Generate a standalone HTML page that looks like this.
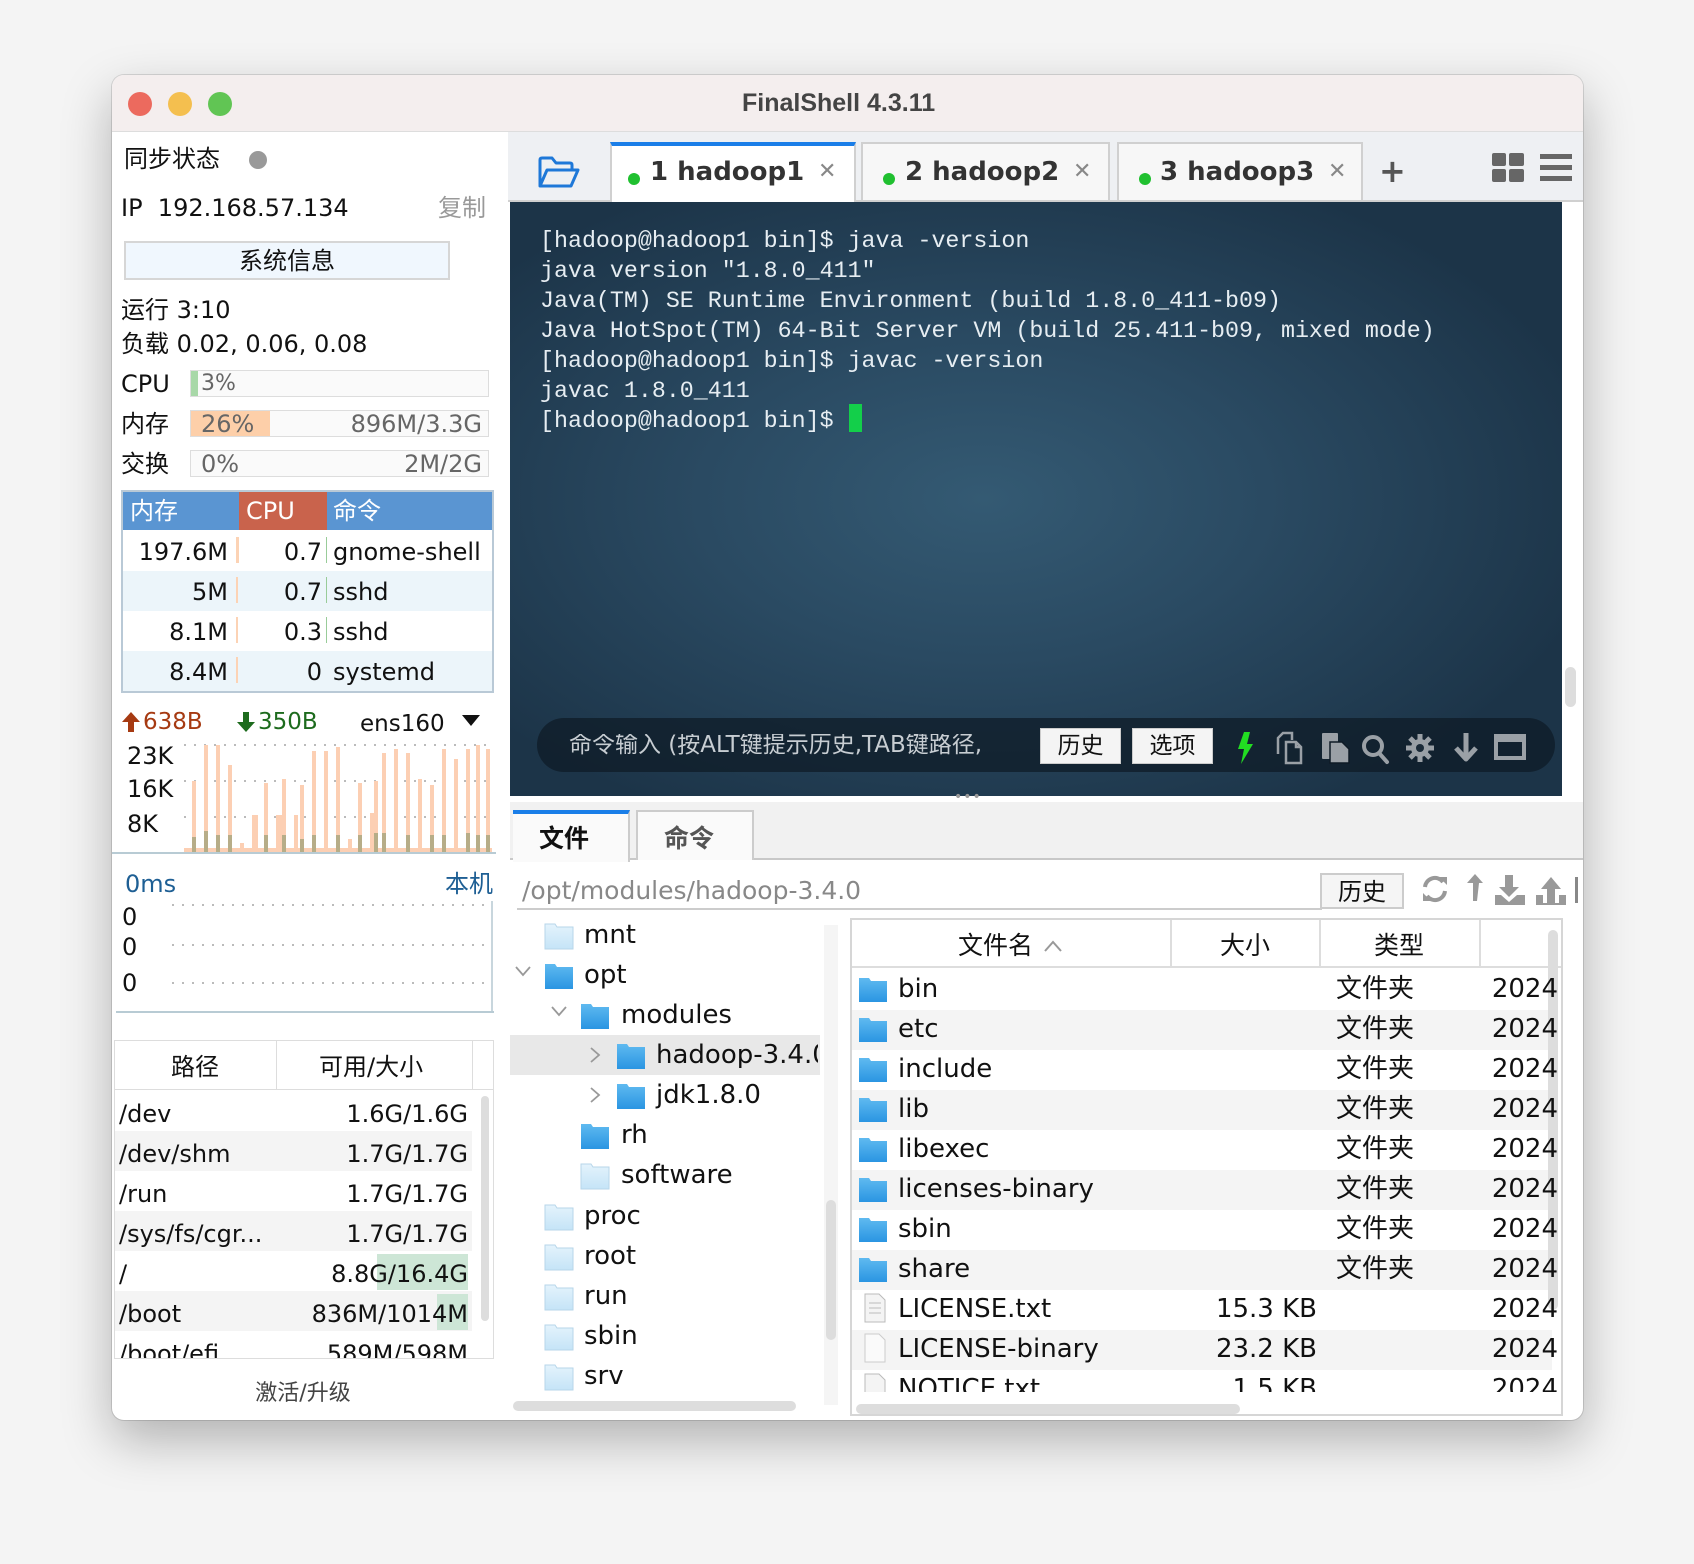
<!DOCTYPE html>
<html><head><meta charset="utf-8">
<style>
*{box-sizing:border-box;margin:0;padding:0}
body{width:1694px;height:1564px;background:#f4f4f4;position:relative;overflow:hidden;font-family:"DejaVu Sans","Noto Sans CJK SC",sans-serif;color:#111}
.a{position:absolute}
.win{position:absolute;left:112px;top:75px;width:1471px;height:1345px;background:#fff;border-radius:12px;overflow:hidden;box-shadow:0 20px 50px rgba(0,0,0,.28),0 0 0 1px rgba(0,0,0,.12)}
.t{position:absolute;white-space:nowrap;font-size:24px;line-height:1;font-family:"DejaVu Sans","Noto Sans CJK SC",sans-serif}
.mono{font-family:"Liberation Mono","DejaVu Sans Mono",monospace}
.bar{position:absolute;height:27px;border:1px solid #ddd;background:#fafafa}
.row{position:absolute;height:40px}
</style></head><body>
<div class="win">
 <div class="a" style="left:0;top:0;width:1471px;height:57px;background:#f4eeee;border-bottom:1px solid #ddd"></div>
 <div class="a" style="left:16px;top:17px;width:24px;height:24px;border-radius:50%;background:#ec6a5e"></div>
 <div class="a" style="left:56px;top:17px;width:24px;height:24px;border-radius:50%;background:#f4bf4f"></div>
 <div class="a" style="left:96px;top:17px;width:24px;height:24px;border-radius:50%;background:#61c554"></div>
 <div class="t" style="left:630px;top:16px;font-size:25px;font-weight:bold;color:#444;font-family:'Liberation Sans',sans-serif">FinalShell 4.3.11</div>

 <!-- left panel -->
 <div class="t" style="left:12px;top:72px">同步状态</div>
 <div class="a" style="left:137px;top:76px;width:18px;height:18px;border-radius:50%;background:#999"></div>
 <div class="t" style="left:9px;top:121px">IP&nbsp; 192.168.57.134</div>
 <div class="t" style="left:326px;top:121px;color:#999">复制</div>
 <div class="a" style="left:12px;top:166px;width:326px;height:39px;background:#f0f7fe;border:2px solid #d6d6d6"></div>
 <div class="t" style="left:12px;top:174px;width:326px;text-align:center">系统信息</div>
 <div class="t" style="left:9px;top:223px">运行 3:10</div>
 <div class="t" style="left:9px;top:257px">负载 0.02, 0.06, 0.08</div>
 <div class="t" style="left:9px;top:297px">CPU</div>
 <div class="bar" style="left:78px;top:295px;width:299px"><div class="a" style="left:0;top:0;width:7px;height:25px;background:#a8d8a8"></div><span class="t" style="left:10px;top:2px;color:#666;font-size:22px">3%</span></div>
 <div class="t" style="left:9px;top:337px">内存</div>
 <div class="bar" style="left:78px;top:335px;width:299px"><div class="a" style="left:0;top:0;width:79px;height:25px;background:#fdcfa9"></div><span class="t" style="left:10px;top:1px;color:#666">26%</span><span class="t" style="right:6px;top:1px;color:#666">896M/3.3G</span></div>
 <div class="t" style="left:9px;top:377px">交换</div>
 <div class="bar" style="left:78px;top:375px;width:299px"><span class="t" style="left:10px;top:1px;color:#666">0%</span><span class="t" style="right:6px;top:1px;color:#666">2M/2G</span></div>

 <!-- process table -->
 <div class="a" style="left:9px;top:415px;width:373px;height:203px;border:2px solid #b9c9d6;background:#fff"></div>
 <div class="a" style="left:11px;top:417px;width:116px;height:38px;background:#5a95d2"></div>
 <div class="a" style="left:127px;top:417px;width:88px;height:38px;background:#c9634c"></div>
 <div class="a" style="left:215px;top:417px;width:165px;height:38px;background:#5a95d2"></div>
 <div class="t" style="left:18px;top:424px;color:#fff">内存</div>
 <div class="t" style="left:134px;top:424px;color:#fff">CPU</div>
 <div class="t" style="left:221px;top:424px;color:#fff">命令</div>
 <div class="row" style="left:11px;top:456px;width:369px;background:#fff"></div>
 <div class="row" style="left:11px;top:496px;width:369px;background:#ecf5fa"></div>
 <div class="row" style="left:11px;top:536px;width:369px;background:#fff"></div>
 <div class="row" style="left:11px;top:576px;width:369px;background:#ecf5fa"></div>
 <div class="a" style="left:124px;top:462px;width:3px;height:26px;background:#fcd3b5"></div>
 <div class="a" style="left:124px;top:502px;width:2px;height:26px;background:#fcd3b5"></div>
 <div class="a" style="left:124px;top:542px;width:2px;height:26px;background:#fcd3b5"></div>
 <div class="a" style="left:124px;top:582px;width:2px;height:26px;background:#fcd3b5"></div>
 <div class="a" style="left:214px;top:462px;width:1px;height:26px;background:#9c9"></div>
 <div class="a" style="left:214px;top:502px;width:1px;height:26px;background:#9c9"></div>
 <div class="a" style="left:214px;top:542px;width:1px;height:26px;background:#9c9"></div>
 <div class="t" style="left:11px;top:465px;width:105px;text-align:right">197.6M</div><div class="t" style="left:127px;top:465px;width:83px;text-align:right">0.7</div><div class="t" style="left:221px;top:465px">gnome-shell</div>
 <div class="t" style="left:11px;top:505px;width:105px;text-align:right">5M</div><div class="t" style="left:127px;top:505px;width:83px;text-align:right">0.7</div><div class="t" style="left:221px;top:505px">sshd</div>
 <div class="t" style="left:11px;top:545px;width:105px;text-align:right">8.1M</div><div class="t" style="left:127px;top:545px;width:83px;text-align:right">0.3</div><div class="t" style="left:221px;top:545px">sshd</div>
 <div class="t" style="left:11px;top:585px;width:105px;text-align:right">8.4M</div><div class="t" style="left:127px;top:585px;width:83px;text-align:right">0</div><div class="t" style="left:221px;top:585px">systemd</div>

 <!-- network -->
 <svg class="a" style="left:9px;top:636px" width="20" height="22" viewBox="0 0 20 22"><path d="M10 1 L19 11 H13 V21 H7 V11 H1 Z" fill="#a63a12"/></svg>
 <div class="t" style="left:31px;top:636px;color:#a63a12;font-size:23px">638B</div>
 <svg class="a" style="left:124px;top:636px" width="20" height="22" viewBox="0 0 20 22"><path d="M10 21 L19 11 H13 V1 H7 V11 H1 Z" fill="#1d6b1d"/></svg>
 <div class="t" style="left:146px;top:636px;color:#1d6b1d;font-size:23px">350B</div>
 <div class="t" style="left:248px;top:638px;font-size:23px">ens160</div>
 <svg class="a" style="left:350px;top:640px" width="18" height="12"><path d="M0 0H18L9 11Z" fill="#111"/></svg>
 <div class="t" style="left:15px;top:669px">23K</div>
 <div class="t" style="left:15px;top:702px">16K</div>
 <div class="t" style="left:15px;top:737px">8K</div>
 <svg class="a" style="left:0;top:660px" width="384" height="120">
  <g stroke="#bbb" stroke-width="2" stroke-dasharray="2 8"><line x1="72" y1="10" x2="380" y2="10"/><line x1="72" y1="46" x2="380" y2="46"/><line x1="72" y1="82" x2="380" y2="82"/></g>
  <g fill="#fccfb3">
   <rect x="72" y="113" width="308" height="4"/>
   <rect x="80" y="46" width="4" height="71"/><rect x="92" y="10" width="4" height="107"/><rect x="104" y="10" width="4" height="107"/><rect x="116" y="30" width="4" height="87"/>
   <rect x="128" y="108" width="4" height="9"/><rect x="140" y="80" width="6" height="37"/><rect x="152" y="48" width="4" height="69"/><rect x="164" y="80" width="6" height="37"/>
   <rect x="170" y="44" width="4" height="73"/><rect x="182" y="80" width="4" height="37"/><rect x="188" y="50" width="4" height="67"/><rect x="200" y="16" width="4" height="101"/>
   <rect x="212" y="16" width="4" height="101"/><rect x="224" y="12" width="4" height="105"/><rect x="236" y="104" width="4" height="13"/><rect x="246" y="48" width="4" height="69"/>
   <rect x="258" y="78" width="4" height="39"/><rect x="262" y="46" width="4" height="71"/><rect x="270" y="18" width="4" height="99"/><rect x="282" y="14" width="4" height="103"/>
   <rect x="294" y="18" width="4" height="99"/><rect x="306" y="44" width="4" height="73"/><rect x="318" y="50" width="4" height="67"/><rect x="330" y="14" width="4" height="103"/>
   <rect x="342" y="24" width="4" height="93"/><rect x="354" y="14" width="4" height="103"/><rect x="364" y="10" width="4" height="107"/><rect x="374" y="14" width="4" height="103"/>
  </g>
  <g fill="#b7ad88">
   <rect x="80" y="102" width="4" height="15"/><rect x="92" y="96" width="4" height="21"/><rect x="104" y="100" width="4" height="17"/><rect x="116" y="100" width="4" height="17"/>
   <rect x="152" y="100" width="4" height="17"/><rect x="170" y="100" width="4" height="17"/><rect x="188" y="104" width="4" height="13"/><rect x="200" y="100" width="4" height="17"/>
   <rect x="224" y="100" width="4" height="17"/><rect x="246" y="100" width="4" height="17"/><rect x="262" y="98" width="4" height="19"/><rect x="270" y="98" width="4" height="19"/>
   <rect x="294" y="100" width="4" height="17"/><rect x="318" y="100" width="4" height="17"/><rect x="330" y="100" width="4" height="17"/><rect x="354" y="98" width="4" height="19"/>
   <rect x="364" y="100" width="4" height="17"/><rect x="374" y="100" width="4" height="17"/>
  </g>
  <line x1="0" y1="118" x2="384" y2="118" stroke="#b8cbd4" stroke-width="2"/>
 </svg>
 <div class="t" style="left:13px;top:797px;color:#1e5f94">0ms</div>
 <div class="t" style="left:333px;top:797px;color:#1e5f94">本机</div>
 <div class="t" style="left:10px;top:830px">0</div>
 <div class="t" style="left:10px;top:860px">0</div>
 <div class="t" style="left:10px;top:896px">0</div>
 <svg class="a" style="left:0;top:820px" width="384" height="120">
  <g stroke="#bbb" stroke-width="2" stroke-dasharray="2 8"><line x1="60" y1="10" x2="380" y2="10"/><line x1="60" y1="50" x2="380" y2="50"/><line x1="60" y1="88" x2="380" y2="88"/></g>
  <line x1="380" y1="6" x2="380" y2="117" stroke="#c8d6dd" stroke-width="2"/>
  <line x1="4" y1="117" x2="382" y2="117" stroke="#b8cbd4" stroke-width="2"/>
 </svg>

 <!-- disk table -->
 <div class="a" style="left:2px;top:965px;width:380px;height:318px;border:1px solid #ddd;border-bottom:none;overflow:hidden">
  <div class="a" style="left:0;top:0;width:380px;height:49px;border-bottom:1px solid #ddd"></div>
  <div class="a" style="left:161px;top:0;width:1px;height:49px;background:#ddd"></div>
  <div class="a" style="left:357px;top:0;width:1px;height:49px;background:#ddd"></div>
  <div class="t" style="left:56px;top:14px">路径</div>
  <div class="t" style="left:204px;top:14px">可用/大小</div>
  <div class="row" style="left:0;top:90px;width:357px;background:#f4f4f4"></div>
  <div class="row" style="left:0;top:170px;width:357px;background:#f4f4f4"></div>
  <div class="row" style="left:0;top:250px;width:357px;background:#f4f4f4"></div>
  <div class="a" style="left:262px;top:213px;width:91px;height:36px;background:#cde6d6"></div>
  <div class="a" style="left:322px;top:253px;width:31px;height:36px;background:#cde6d6"></div>
  <div class="t" style="left:4px;top:61px">/dev</div><div class="t" style="left:150px;top:61px;width:203px;text-align:right">1.6G/1.6G</div>
  <div class="t" style="left:4px;top:101px">/dev/shm</div><div class="t" style="left:150px;top:101px;width:203px;text-align:right">1.7G/1.7G</div>
  <div class="t" style="left:4px;top:141px">/run</div><div class="t" style="left:150px;top:141px;width:203px;text-align:right">1.7G/1.7G</div>
  <div class="t" style="left:4px;top:181px">/sys/fs/cgr...</div><div class="t" style="left:150px;top:181px;width:203px;text-align:right">1.7G/1.7G</div>
  <div class="t" style="left:4px;top:221px">/</div><div class="t" style="left:150px;top:221px;width:203px;text-align:right">8.8G/16.4G</div>
  <div class="t" style="left:4px;top:261px">/boot</div><div class="t" style="left:150px;top:261px;width:203px;text-align:right">836M/1014M</div>
  <div class="t" style="left:4px;top:301px">/boot/efi</div><div class="t" style="left:150px;top:301px;width:203px;text-align:right">589M/598M</div>
  <div class="a" style="left:366px;top:55px;width:8px;height:225px;border-radius:4px;background:#ddd"></div>
 </div>
 <div class="a" style="left:2px;top:1283px;width:380px;height:1px;background:#ddd"></div>
 <div class="t" style="left:0;top:1308px;width:382px;text-align:center;font-size:22px;color:#444">激活/升级</div>

 <!-- right: tab bar -->
 <div class="a" style="left:396px;top:57px;width:1075px;height:70px;background:#eef0f3;border-bottom:2px solid #d0d0d0"></div>
 <svg class="a" style="left:425px;top:80px" width="44" height="34" viewBox="0 0 44 34"><path d="M3 31 V5 Q3 3 5 3 H15 L19 8 H33 Q35 8 35 10 V14 M3 31 L10 15 H41 L34 31 Z" fill="none" stroke="#1e78d8" stroke-width="3" stroke-linejoin="round"/></svg>
 <div class="a" style="left:498px;top:67px;width:246px;height:62px;background:#fff;border-left:2px solid #d0d0d0;border-right:2px solid #d0d0d0;border-top:4px solid #1a7ee8"></div>
 <div class="a" style="left:749px;top:67px;width:249px;height:60px;background:#f7f7f7;border:2px solid #d0d0d0"></div>
 <div class="a" style="left:1005px;top:67px;width:246px;height:60px;background:#f7f7f7;border:2px solid #d0d0d0"></div>
 <div class="a" style="left:516px;top:98px;width:12px;height:12px;border-radius:50%;background:#20c030"></div>
 <div class="t" style="left:538px;top:84px;font-size:26px;font-weight:bold;color:#333">1 hadoop1</div>
 <div class="t" style="left:706px;top:86px;font-size:22px;color:#888">✕</div>
 <div class="a" style="left:771px;top:98px;width:12px;height:12px;border-radius:50%;background:#20c030"></div>
 <div class="t" style="left:793px;top:84px;font-size:26px;font-weight:bold;color:#333">2 hadoop2</div>
 <div class="t" style="left:961px;top:86px;font-size:22px;color:#888">✕</div>
 <div class="a" style="left:1027px;top:98px;width:12px;height:12px;border-radius:50%;background:#20c030"></div>
 <div class="t" style="left:1048px;top:84px;font-size:26px;font-weight:bold;color:#333">3 hadoop3</div>
 <div class="t" style="left:1216px;top:86px;font-size:22px;color:#888">✕</div>
 <div class="t" style="left:1267px;top:80px;font-size:32px;font-weight:bold;color:#555">+</div>
 <svg class="a" style="left:1380px;top:78px" width="32" height="30"><rect x="0" y="0" width="14" height="13" rx="2" fill="#666"/><rect x="17" y="0" width="15" height="13" rx="2" fill="#666"/><rect x="0" y="16" width="14" height="13" rx="2" fill="#666"/><rect x="17" y="16" width="15" height="13" rx="2" fill="#666"/></svg>
 <svg class="a" style="left:1428px;top:78px" width="32" height="30"><rect x="0" y="1" width="32" height="5" fill="#666"/><rect x="0" y="12" width="32" height="5" fill="#666"/><rect x="0" y="23" width="32" height="5" fill="#666"/></svg>

 <!-- terminal -->
 <div class="a" style="left:398px;top:127px;width:1052px;height:594px;background:radial-gradient(ellipse 60% 60% at 45% 50%,#345a73 0%,#2a4a62 45%,#1c3448 100%)"></div>
 <div class="a" style="left:1450px;top:127px;width:21px;height:594px;background:#fff"></div>
 <div class="a" style="left:1453px;top:592px;width:11px;height:40px;border-radius:6px;background:#ddd"></div>
 <div class="a mono" style="left:428px;top:151px;font-size:23.3px;line-height:30px;color:#e6edf2;white-space:pre">[hadoop@hadoop1 bin]$ java -version
java version "1.8.0_411"
Java(TM) SE Runtime Environment (build 1.8.0_411-b09)
Java HotSpot(TM) 64-Bit Server VM (build 25.411-b09, mixed mode)
[hadoop@hadoop1 bin]$ javac -version
javac 1.8.0_411
[hadoop@hadoop1 bin]$ </div>
 <div class="a" style="left:737px;top:329px;width:13px;height:28px;background:#13cf4a"></div>
 <div class="a" style="left:425px;top:643px;width:1018px;height:54px;border-radius:27px;background:rgba(14,26,38,.72)"></div>
 <div class="t" style="left:457px;top:659px;font-size:23px;color:#c7cdd2;width:466px;overflow:hidden">命令输入 (按ALT键提示历史,TAB键路径,</div>
 <div class="a" style="left:928px;top:653px;width:81px;height:36px;background:#f4f4f4;border:1px solid #ccc"></div>
 <div class="t" style="left:928px;top:660px;width:81px;text-align:center;font-size:23px">历史</div>
 <div class="a" style="left:1020px;top:653px;width:81px;height:36px;background:#f4f4f4;border:1px solid #ccc"></div>
 <div class="t" style="left:1020px;top:660px;width:81px;text-align:center;font-size:23px">选项</div>
 <svg class="a" style="left:1124px;top:655px" width="300" height="36" viewBox="0 0 300 36">
  <path d="M8 2 L14 2 L11 14 L17 14 L5 34 L8 19 L2 19 Z" fill="#22dd22"/>
  <g transform="translate(6,0)" fill="none" stroke="#9aa0a6" stroke-width="2.5"><path d="M36 24 V8 L41 3 H50 V10 M44 12 H54 L59 17 V33 H44 Z M54 12 V17 H59"/></g>
  <g transform="translate(10,0)" fill="#9aa0a6"><rect x="76" y="3" width="16" height="26" rx="1"/><path d="M84 12 H96 L103 19 V33 H84 Z" stroke="#0e1a26" stroke-width="1.5"/></g>
  <g transform="translate(12,0)" fill="none" stroke="#9aa0a6" stroke-width="4"><circle cx="125" cy="16" r="9"/><path d="M131 23 L139 32" stroke-linecap="round"/></g>
  <g transform="translate(15,0)" fill="#9aa0a6"><circle cx="169" cy="18" r="9"/><g stroke="#9aa0a6" stroke-width="5"><line x1="169" y1="4" x2="169" y2="32"/><line x1="155" y1="18" x2="183" y2="18"/><line x1="159" y1="8" x2="179" y2="28"/><line x1="179" y1="8" x2="159" y2="28"/></g><circle cx="169" cy="18" r="4" fill="#1a2a38"/></g>
  <path transform="translate(20,0)" d="M210 3 V28 M200 18 L210 29 L220 18" fill="none" stroke="#9aa0a6" stroke-width="5" stroke-linejoin="round"/>
  <g transform="translate(20,0)"><rect x="240" y="6" width="28" height="22" fill="none" stroke="#9aa0a6" stroke-width="4"/><rect x="240" y="6" width="28" height="6" fill="#9aa0a6"/></g>
 </svg>
 <div class="t" style="left:842px;top:715px;font-size:14px;color:#999;letter-spacing:1px">•••</div>

 <!-- bottom tabs -->
 <div class="a" style="left:398px;top:727px;width:1073px;height:58px;background:#f1f1f1;border-bottom:2px solid #c8c8c8"></div>
 <div class="a" style="left:401px;top:735px;width:117px;height:52px;background:#fafafa;border-top:4px solid #1a7ee8;border-right:2px solid #ccc"></div>
 <div class="t" style="left:427px;top:751px;font-size:25px;font-weight:bold">文件</div>
 <div class="a" style="left:524px;top:735px;width:118px;height:50px;background:#fafafa;border:2px solid #ccc;border-bottom:none"></div>
 <div class="t" style="left:552px;top:751px;font-size:25px;font-weight:bold;color:#555">命令</div>

 <!-- path row -->
 <div class="t" style="left:410px;top:803px;font-size:25px;color:#888">/opt/modules/hadoop-3.4.0</div>
 <div class="a" style="left:405px;top:833px;width:805px;height:2px;background:#ccc"></div>
 <div class="a" style="left:1208px;top:798px;width:84px;height:36px;background:#f5f5f5;border:2px solid #ccc"></div>
 <div class="t" style="left:1208px;top:805px;width:84px;text-align:center;font-size:24px">历史</div>
 <svg class="a" style="left:1305px;top:798px" width="166" height="32" viewBox="0 0 166 32">
  <g fill="none" stroke="#999" stroke-width="4"><path d="M8 14 A10 10 0 0 1 26 9"/><path d="M28 18 A10 10 0 0 1 10 23"/></g>
  <path d="M22 4 L30 4 L30 12 Z M14 28 L6 28 L6 20 Z" fill="#999"/>
  <g transform="translate(12,0)"><path d="M48 28 H44 V10 L38 10 L46 1 L54 10 L50 10 Z" fill="#999"/></g>
  <g transform="translate(12,0)"><path d="M84 2 V14 H90 L80 24 L70 14 H76 V2 Z M66 22 H72 L80 29 L88 22 H96 V32 H66 Z" fill="#999"/></g>
  <g transform="translate(6,0)"><path d="M124 32 V16 H118 L128 4 L138 16 H132 V32 Z" fill="#999"/><path d="M113 22 H120 V30 H136 V22 H143 V32 H113 Z" fill="#999"/></g>
  <rect x="158" y="4" width="3" height="26" fill="#888"/>
 </svg>

 <!-- tree -->
 <div class="a" style="left:398px;top:840px;width:314px;height:500px;background:#fff;overflow:hidden">
  <div class="a" style="left:0;top:120px;width:310px;height:40px;background:#e8e8e8"></div>
 </div>
 <div class="a" style="left:712px;top:850px;width:14px;height:480px;background:#f5f5f5"></div>
 <div class="a" style="left:714px;top:1125px;width:10px;height:140px;border-radius:5px;background:#ddd"></div>
 <div class="a" style="left:401px;top:1326px;width:283px;height:10px;border-radius:5px;background:#ddd"></div>

 <!-- file table -->
 <div class="a" style="left:738px;top:843px;width:713px;height:498px;border:2px solid #d6d6d6;background:#fff;overflow:hidden">
  <div class="a" style="left:0;top:0;width:710px;height:48px;border-bottom:2px solid #ddd"></div>
  <div class="a" style="left:318px;top:0;width:2px;height:48px;background:#ddd"></div>
  <div class="a" style="left:467px;top:0;width:2px;height:48px;background:#ddd"></div>
  <div class="a" style="left:627px;top:0;width:2px;height:48px;background:#ddd"></div>
  <div class="t" style="left:106px;top:13px;font-size:25px">文件名</div>
  <svg class="a" style="left:192px;top:20px" width="18" height="12"><path d="M1 11 L9 2 L17 11" fill="none" stroke="#999" stroke-width="2"/></svg>
  <div class="t" style="left:368px;top:13px;font-size:25px">大小</div>
  <div class="t" style="left:522px;top:13px;font-size:25px">类型</div>
  <div class="row" style="left:0;top:90px;width:700px;background:#f4f4f4"></div>
  <div class="row" style="left:0;top:170px;width:700px;background:#f4f4f4"></div>
  <div class="row" style="left:0;top:250px;width:700px;background:#f4f4f4"></div>
  <div class="row" style="left:0;top:330px;width:700px;background:#f4f4f4"></div>
  <div class="row" style="left:0;top:410px;width:700px;background:#f4f4f4"></div>
  <div class="a" style="left:696px;top:10px;width:10px;height:380px;border-radius:5px;background:#ddd"></div>
  <div class="a" style="left:0;top:478px;width:710px;height:20px;background:#fff"></div>
  <div class="a" style="left:4px;top:484px;width:384px;height:10px;border-radius:5px;background:#ddd"></div>
 </div>
</div>

<svg width="0" height="0" style="position:absolute"><defs>
<linearGradient id="fb" x1="0" y1="0" x2="0" y2="1"><stop offset="0" stop-color="#5fbaf0"/><stop offset="1" stop-color="#2a95e2"/></linearGradient>
<linearGradient id="fl" x1="0" y1="0" x2="0" y2="1"><stop offset="0" stop-color="#e4f3fc"/><stop offset="1" stop-color="#c5e4f7"/></linearGradient>
</defs></svg>
<div style="position:absolute;left:0;top:0">
 <svg class="a" style="left:544px;top:920px" width="30" height="30"><path d="M1 4 H11 L13 7 H29 V29 H1 Z" fill="url(#fl)" stroke="#b7d6ea"/></svg>
 <div class="t" style="left:584px;top:922px;font-size:26px">mnt</div>
 <svg class="a" style="left:514px;top:965px" width="18" height="14"><path d="M2 2 L9 10 L16 2" fill="none" stroke="#999" stroke-width="1.8"/></svg>
 <svg class="a" style="left:544px;top:960px" width="30" height="30"><path d="M1 4 H11 L13 7 H29 V29 H1 Z" fill="url(#fb)"/></svg>
 <div class="t" style="left:584px;top:962px;font-size:26px">opt</div>
 <svg class="a" style="left:550px;top:1005px" width="18" height="14"><path d="M2 2 L9 10 L16 2" fill="none" stroke="#999" stroke-width="1.8"/></svg>
 <svg class="a" style="left:580px;top:1000px" width="30" height="30"><path d="M1 4 H11 L13 7 H29 V29 H1 Z" fill="url(#fb)"/></svg>
 <div class="t" style="left:621px;top:1002px;font-size:26px">modules</div>
 <svg class="a" style="left:588px;top:1046px" width="14" height="18"><path d="M3 2 L11 9 L3 16" fill="none" stroke="#999" stroke-width="1.8"/></svg>
 <svg class="a" style="left:616px;top:1040px" width="30" height="30"><path d="M1 4 H11 L13 7 H29 V29 H1 Z" fill="url(#fb)"/></svg>
 <div class="t" style="left:656px;top:1042px;font-size:26px;width:162px;overflow:hidden">hadoop-3.4.0</div>
 <svg class="a" style="left:588px;top:1086px" width="14" height="18"><path d="M3 2 L11 9 L3 16" fill="none" stroke="#999" stroke-width="1.8"/></svg>
 <svg class="a" style="left:616px;top:1080px" width="30" height="30"><path d="M1 4 H11 L13 7 H29 V29 H1 Z" fill="url(#fb)"/></svg>
 <div class="t" style="left:656px;top:1082px;font-size:26px">jdk1.8.0</div>
 <svg class="a" style="left:580px;top:1120px" width="30" height="30"><path d="M1 4 H11 L13 7 H29 V29 H1 Z" fill="url(#fb)"/></svg>
 <div class="t" style="left:621px;top:1122px;font-size:26px">rh</div>
 <svg class="a" style="left:580px;top:1160px" width="30" height="30"><path d="M1 4 H11 L13 7 H29 V29 H1 Z" fill="url(#fl)" stroke="#b7d6ea"/></svg>
 <div class="t" style="left:621px;top:1162px;font-size:26px">software</div>
 <svg class="a" style="left:544px;top:1201px" width="30" height="30"><path d="M1 4 H11 L13 7 H29 V29 H1 Z" fill="url(#fl)" stroke="#b7d6ea"/></svg>
 <div class="t" style="left:584px;top:1203px;font-size:26px">proc</div>
 <svg class="a" style="left:544px;top:1241px" width="30" height="30"><path d="M1 4 H11 L13 7 H29 V29 H1 Z" fill="url(#fl)" stroke="#b7d6ea"/></svg>
 <div class="t" style="left:584px;top:1243px;font-size:26px">root</div>
 <svg class="a" style="left:544px;top:1281px" width="30" height="30"><path d="M1 4 H11 L13 7 H29 V29 H1 Z" fill="url(#fl)" stroke="#b7d6ea"/></svg>
 <div class="t" style="left:584px;top:1283px;font-size:26px">run</div>
 <svg class="a" style="left:544px;top:1321px" width="30" height="30"><path d="M1 4 H11 L13 7 H29 V29 H1 Z" fill="url(#fl)" stroke="#b7d6ea"/></svg>
 <div class="t" style="left:584px;top:1323px;font-size:26px">sbin</div>
 <svg class="a" style="left:544px;top:1361px" width="30" height="30"><path d="M1 4 H11 L13 7 H29 V29 H1 Z" fill="url(#fl)" stroke="#b7d6ea"/></svg>
 <div class="t" style="left:584px;top:1363px;font-size:26px;height:28px;overflow:hidden">srv</div>
</div>
<div style="position:absolute;left:0;top:0">
 <svg class="a" style="left:858px;top:975px" width="30" height="28"><path d="M1 3 H11 L13 6 H29 V27 H1 Z" fill="url(#fb)"/></svg><div class="t" style="left:898px;top:976px;font-size:26px">bin</div><div class="t" style="left:1336px;top:976px;font-size:26px">文件夹</div><div class="t" style="left:1480px;top:976px;font-size:26px;width:78px;text-align:right">2024</div>
 <svg class="a" style="left:858px;top:1015px" width="30" height="28"><path d="M1 3 H11 L13 6 H29 V27 H1 Z" fill="url(#fb)"/></svg><div class="t" style="left:898px;top:1016px;font-size:26px">etc</div><div class="t" style="left:1336px;top:1016px;font-size:26px">文件夹</div><div class="t" style="left:1480px;top:1016px;font-size:26px;width:78px;text-align:right">2024</div>
 <svg class="a" style="left:858px;top:1055px" width="30" height="28"><path d="M1 3 H11 L13 6 H29 V27 H1 Z" fill="url(#fb)"/></svg><div class="t" style="left:898px;top:1056px;font-size:26px">include</div><div class="t" style="left:1336px;top:1056px;font-size:26px">文件夹</div><div class="t" style="left:1480px;top:1056px;font-size:26px;width:78px;text-align:right">2024</div>
 <svg class="a" style="left:858px;top:1095px" width="30" height="28"><path d="M1 3 H11 L13 6 H29 V27 H1 Z" fill="url(#fb)"/></svg><div class="t" style="left:898px;top:1096px;font-size:26px">lib</div><div class="t" style="left:1336px;top:1096px;font-size:26px">文件夹</div><div class="t" style="left:1480px;top:1096px;font-size:26px;width:78px;text-align:right">2024</div>
 <svg class="a" style="left:858px;top:1135px" width="30" height="28"><path d="M1 3 H11 L13 6 H29 V27 H1 Z" fill="url(#fb)"/></svg><div class="t" style="left:898px;top:1136px;font-size:26px">libexec</div><div class="t" style="left:1336px;top:1136px;font-size:26px">文件夹</div><div class="t" style="left:1480px;top:1136px;font-size:26px;width:78px;text-align:right">2024</div>
 <svg class="a" style="left:858px;top:1175px" width="30" height="28"><path d="M1 3 H11 L13 6 H29 V27 H1 Z" fill="url(#fb)"/></svg><div class="t" style="left:898px;top:1176px;font-size:26px">licenses-binary</div><div class="t" style="left:1336px;top:1176px;font-size:26px">文件夹</div><div class="t" style="left:1480px;top:1176px;font-size:26px;width:78px;text-align:right">2024</div>
 <svg class="a" style="left:858px;top:1215px" width="30" height="28"><path d="M1 3 H11 L13 6 H29 V27 H1 Z" fill="url(#fb)"/></svg><div class="t" style="left:898px;top:1216px;font-size:26px">sbin</div><div class="t" style="left:1336px;top:1216px;font-size:26px">文件夹</div><div class="t" style="left:1480px;top:1216px;font-size:26px;width:78px;text-align:right">2024</div>
 <svg class="a" style="left:858px;top:1255px" width="30" height="28"><path d="M1 3 H11 L13 6 H29 V27 H1 Z" fill="url(#fb)"/></svg><div class="t" style="left:898px;top:1256px;font-size:26px">share</div><div class="t" style="left:1336px;top:1256px;font-size:26px">文件夹</div><div class="t" style="left:1480px;top:1256px;font-size:26px;width:78px;text-align:right">2024</div>
 <svg class="a" style="left:864px;top:1293px" width="22" height="30"><path d="M1 1 H15 L21 7 V29 H1 Z" fill="#f4f4f4" stroke="#bbb"/><g stroke="#bbb"><line x1="5" y1="10" x2="17" y2="10"/><line x1="5" y1="15" x2="17" y2="15"/><line x1="5" y1="20" x2="17" y2="20"/></g></svg><div class="t" style="left:898px;top:1296px;font-size:26px">LICENSE.txt</div><div class="t" style="left:1170px;top:1296px;font-size:26px;width:147px;text-align:right">15.3 KB</div><div class="t" style="left:1480px;top:1296px;font-size:26px;width:78px;text-align:right">2024</div>
 <svg class="a" style="left:864px;top:1333px" width="22" height="30"><path d="M1 1 H15 L21 7 V29 H1 Z" fill="#fafafa" stroke="#ccc"/></svg><div class="t" style="left:898px;top:1336px;font-size:26px">LICENSE-binary</div><div class="t" style="left:1170px;top:1336px;font-size:26px;width:147px;text-align:right">23.2 KB</div><div class="t" style="left:1480px;top:1336px;font-size:26px;width:78px;text-align:right">2024</div>
 <div class="a" style="left:850px;top:1373px;width:708px;height:19px;overflow:hidden">
  <svg class="a" style="left:14px;top:0" width="22" height="30"><path d="M1 1 H15 L21 7 V29 H1 Z" fill="#f4f4f4" stroke="#bbb"/></svg><div class="t" style="left:48px;top:3px;font-size:26px">NOTICE.txt</div><div class="t" style="left:320px;top:3px;font-size:26px;width:147px;text-align:right">1.5 KB</div><div class="t" style="left:630px;top:3px;font-size:26px;width:78px;text-align:right">2024</div>
 </div>
</div>
</body></html>
